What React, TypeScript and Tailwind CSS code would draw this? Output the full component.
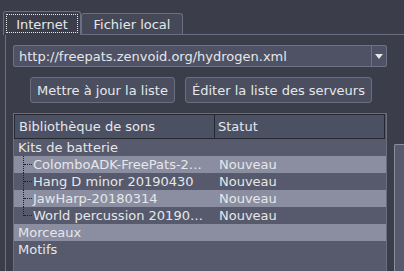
import React from "react";

const rows = [
  { name: "Kits de batterie", status: "", child: false, light: false },
  { name: "ColomboADK-FreePats-2…", status: "Nouveau", child: true, light: true },
  { name: "Hang D minor 20190430", status: "Nouveau", child: true, light: false },
  { name: "JawHarp-20180314", status: "Nouveau", child: true, light: true },
  { name: "World percussion 20190…", status: "Nouveau", child: true, light: false, last: true },
  { name: "Morceaux", status: "", child: false, light: true },
  { name: "Motifs", status: "", child: false, light: false },
];

export default function App() {
  return (
    <div
      className="w-[404px] h-[271px] overflow-hidden bg-[#3b3e4a] text-[#e6e7ea] text-[13px] leading-none"
      style={{ fontFamily: '"DejaVu Sans", sans-serif' }}
    >
      {/* tabs */}
      <div className="flex items-end pl-[3px] pt-[10px] h-[34px]">
        <div className="relative z-10 w-[78px] h-[24px] mb-[-1px] bg-[#3b3e4a] border border-b-0 border-[#6a6e7e] rounded-t-[3px] p-[2px]">
          <div className="h-full border border-dotted border-[#e6e7ea] flex items-center justify-center pt-[1px]">
            Internet
          </div>
        </div>
        <div className="w-[102px] h-[21px] bg-[#454957] border border-b-0 border-[#6a6e7e] rounded-t-[3px] flex items-center justify-center pt-[1px]">
          Fichier local
        </div>
      </div>
      {/* pane */}
      <div className="ml-[5px] border-l border-t border-[#6a6e7e] h-[238px] pl-[7px] pt-[10px]">
        <div className="w-[374px] h-[22px] flex border border-[#6e7282] rounded-[2px] bg-[#4e5264]">
          <div className="flex-1 flex items-center pl-[5px]">http://freepats.zenvoid.org/hydrogen.xml</div>
          <div className="w-[15px] border-l border-[#6e7282] flex items-center justify-center">
            <svg width="8" height="5" viewBox="0 0 8 5">
              <path d="M0 0 L8 0 L4 5 Z" fill="#e6e7ea" />
            </svg>
          </div>
        </div>
        <div className="flex mt-[10px] pl-[17px] gap-[10px]">
          <div className="w-[145px] h-[26px] border border-[#6a6e7e] rounded-[3px] bg-[#4a4e5e] flex items-center justify-center">
            Mettre à jour la liste
          </div>
          <div className="w-[187px] h-[26px] border border-[#6a6e7e] rounded-[3px] bg-[#4a4e5e] flex items-center justify-center">
            Éditer la liste des serveurs
          </div>
        </div>
        <div className="flex items-start mt-[10px]">
          <div className="w-[374px] h-[160px] border border-[#6a6e7e] bg-[#565a6c]">
            <div className="flex h-[25px] w-[372px]">
              <div className="w-[201px] border border-[#262830] bg-[#4c5063] flex items-center pl-[4px]">
                Bibliothèque de sons
              </div>
              <div className="w-[170px] border border-l-0 border-[#262830] bg-[#4c5063] flex items-center pl-[3px]">
                Statut
              </div>
            </div>
            {rows.map((r, i) => (
              <div
                key={i}
                className={`flex h-[17px] w-[372px] ${r.light ? "bg-[#8a8ea0]" : ""}`}
              >
                <div className="w-[201px] flex items-center relative">
                  {r.child && (
                    <>
                      <div
                        className={`absolute left-[9px] top-0 border-l border-dotted border-[#1e2028] ${r.last ? "h-[9px]" : "h-[17px]"}`}
                      />
                      <div className="absolute left-[10px] top-[8px] w-[8px] border-t border-dotted border-[#1e2028]" />
                    </>
                  )}
                  <span className={`whitespace-nowrap ${r.child ? "pl-[19px]" : "pl-[4px]"}`}>{r.name}</span>
                </div>
                <div className="flex-1 flex items-center pl-[4px]">{r.status}</div>
              </div>
            ))}
          </div>
          <div className="ml-[7px] mt-[31px] w-[20px] h-[140px] border-l border-t border-[#8a8ea0] bg-[#565a6c] rounded-tl-[2px]" />
        </div>
      </div>
    </div>
  );
}
